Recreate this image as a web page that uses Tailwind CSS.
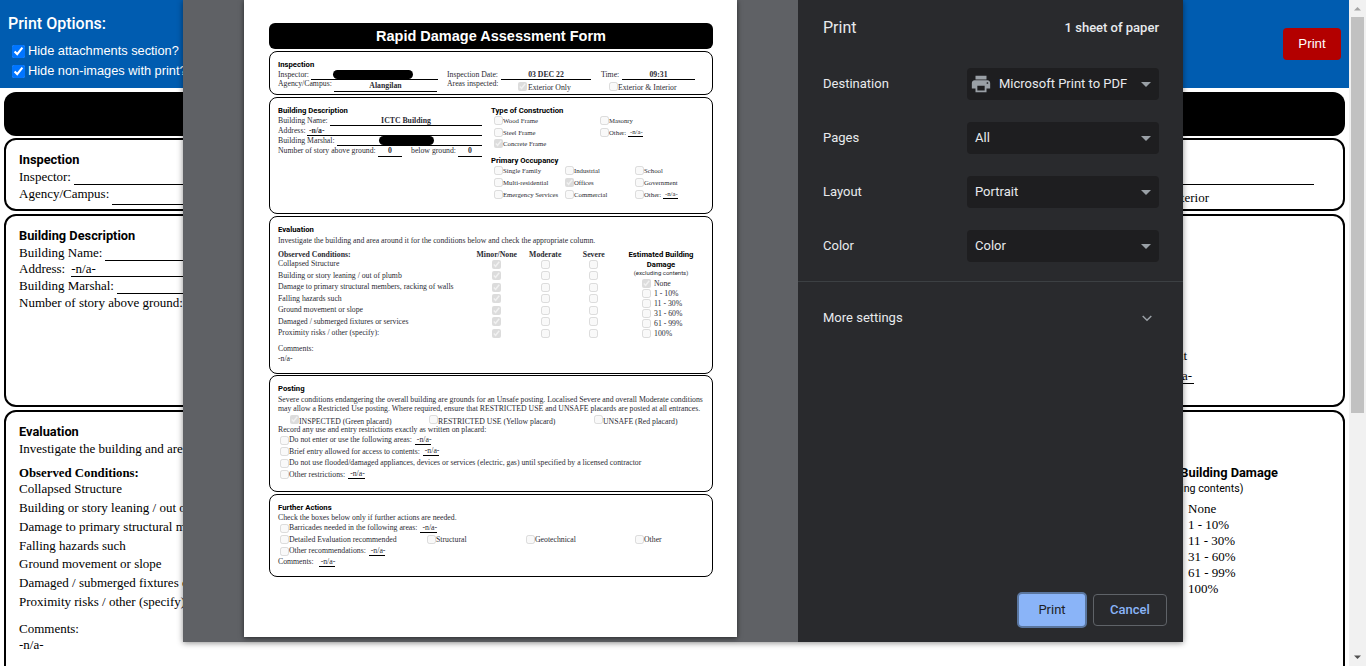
<!DOCTYPE html>
<html lang="en">
<head>
  <meta charset="UTF-8">
  <title>Rapid Damage Assessment Form</title>
  <script src="https://cdn.jsdelivr.net/npm/@tailwindcss/browser@4"></script>
</head>
<body class="overflow-hidden bg-white">
<div class="relative flex h-[666px] w-[1366px] overflow-hidden font-['Liberation_Serif',serif] text-black">

  <!-- page behind the print dialog -->
  <main class="w-[1349px] shrink-0">
    <header class="flex h-[88px] justify-between bg-[#005cb0] pl-2 pr-2 text-white font-['Roboto',sans-serif]">
      <div>
        <h2 class="mt-[14px] text-[16px] leading-[20px] font-medium">Print Options:</h2>
        <label class="mt-[7px] flex h-5 items-center gap-[3px] pl-1 text-[12.8px] font-['Liberation_Sans',sans-serif]"><input type="checkbox" checked class="m-0 h-[13px] w-[13px]">Hide attachments section?</label>
        <label class="flex h-5 items-center gap-[3px] pl-1 text-[12.8px] font-['Liberation_Sans',sans-serif]"><input type="checkbox" checked class="m-0 h-[13px] w-[13px]">Hide non-images with print?</label>
      </div>
      <button class="mt-7 h-8 w-[58px] rounded bg-[#b30000] text-[13.33px] font-['Liberation_Sans',sans-serif] text-white">Print</button>
    </header>

    <div class="px-1 pt-1 text-[13px]">
      <div class="h-[44px] rounded-[12px] bg-black"></div>

      <section class="mt-[2px] h-[73px] rounded-[12px] border-2 border-black pl-[13px] pt-3">
        <h3 class="h-4 text-[12.8px] leading-4 font-bold font-['Roboto',sans-serif]">Inspection</h3>
        <div class="flex h-[17px] pr-[29px] leading-[17px]"><span>Inspector:</span><span class="ml-[3px] flex-1 border-b border-black"></span></div>
        <div class="flex h-5 leading-[17px]"><span>Agency/Campus:</span><span class="ml-[3px] w-[400px] border-b border-black"></span><span class="ml-auto mr-[134px] pt-1">Exterior &amp; Interior</span></div>
      </section>

      <section class="mt-[3px] flex h-[193px] justify-between rounded-[12px] border-2 border-black pl-[13px] pt-3">
        <div class="w-[500px]">
          <h3 class="h-4 text-[12.8px] leading-4 font-bold font-['Roboto',sans-serif]">Building Description</h3>
          <div class="flex h-[17px] leading-[17px]"><span>Building Name:</span><span class="ml-[3px] flex-1 border-b border-black"></span></div>
          <div class="flex h-[16px] leading-[16px]"><span>Address:</span><span class="ml-[6px] flex-1 border-b border-black">-n/a-</span></div>
          <div class="flex h-[17px] leading-[17px]"><span>Building Marshal:</span><span class="ml-[3px] flex-1 border-b border-black"></span></div>
          <div class="h-[17px] leading-[17px]">Number of story above ground:</div>
        </div>
        <div class="mr-[149px] flex flex-col items-end pt-[120px]">
          <span class="mr-[7px] h-5 leading-4">Government</span>
          <span class="leading-[15px]">Other: <span class="border-b border-black px-[2px]">-n/a-</span></span>
        </div>
      </section>

      <section class="mt-[3px] flex h-[270px] justify-between rounded-[12px] border-2 border-black pl-[13px] pt-3">
        <div class="w-[200px] whitespace-nowrap">
          <h3 class="h-4 text-[12.8px] leading-4 font-bold font-['Roboto',sans-serif]">Evaluation</h3>
          <p class="h-[17px] leading-[17px]">Investigate the building and area</p>
          <p class="mt-2 h-4 text-[12.8px] leading-4 font-bold">Observed Conditions:</p>
          <p class="h-4 leading-4">Collapsed Structure</p>
          <p class="mt-[3px] h-4 leading-4">Building or story leaning / out of</p>
          <p class="mt-[3px] h-4 leading-4">Damage to primary structural me</p>
          <p class="mt-[3px] h-4 leading-4">Falling hazards such</p>
          <p class="mt-[2px] h-4 leading-4">Ground movement or slope</p>
          <p class="mt-[3px] h-4 leading-4">Damaged / submerged fixtures or</p>
          <p class="mt-[3px] h-4 leading-4">Proximity risks / other (specify):</p>
          <p class="mt-[11px] h-4 leading-4">Comments:</p>
          <p class="h-4 leading-4">-n/a-</p>
        </div>
        <div class="mr-[65px] w-[164px] pt-[41px]">
          <h4 class="whitespace-nowrap text-right text-[12.8px] leading-4 font-bold font-['Roboto',sans-serif]">Estimated Building Damage</h4>
          <p class="pr-[2px] text-center text-[10.67px] leading-4 font-['Roboto',sans-serif]">(excluding contents)</p>
          <ul class="mt-1 pl-[74px] leading-4">
            <li>None</li><li>1 - 10%</li><li>11 - 30%</li><li>31 - 60%</li><li>61 - 99%</li><li>100%</li>
          </ul>
        </div>
      </section>
    </div>
  </main>

  <!-- scrollbar -->
  <div class="flex w-[17px] shrink-0 flex-col items-center bg-[#f1f1f1]">
    <svg class="h-[17px] w-[17px]" viewBox="0 0 17 17"><path d="M5 10.5 8.5 7l3.500 3.500z" fill="#a3a3a3"/></svg>
    <div class="h-[396px] w-[13px] bg-[#c1c1c1]"></div>
    <svg class="mt-auto h-[17px] w-[17px]" viewBox="0 0 17 17"><path d="M5 6.500 8.500 10l3.500-3.500z" fill="#505050"/></svg>
  </div>

  <!-- print dialog -->
  <div class="absolute left-[183px] top-0 flex h-[642px] w-[1000px] shadow-[0_1px_6px_rgba(0,0,0,0.45)]">
    <div class="w-[615px] bg-[#5f6165] pl-[61px]">
      <div class="h-[637px] w-[493px] bg-white pl-[25px] pt-[23px] text-[7.75px] leading-[10px] text-[#2b2b33] shadow-[0_1px_5px_rgba(0,0,0,0.6)] [&_input]:opacity-75">
        <div class="w-[444px]">
          <h1 class="flex h-[26px] items-center justify-center rounded-[6px] bg-black text-[14.5px] font-bold text-white font-['Liberation_Sans',sans-serif]">Rapid Damage Assessment Form</h1>

          <section class="mt-[2px] h-[44px] rounded-[8px] border-[1.5px] border-black pl-2 pt-2">
            <h3 class="h-[9px] text-[7.7px] leading-[9px] font-bold text-black font-['Roboto',sans-serif]">Inspection</h3>
            <div class="mt-[1px] flex h-[10px] leading-[10px]">
              <span class="w-[33px]">Inspector:</span>
              <span class="flex w-[127px] items-center border-b border-black pl-[22px]"><span class="h-[9px] w-[80px] rounded-full bg-black"></span></span>
              <span class="ml-[9px] w-[54px]">Inspection Date:</span>
              <span class="w-[90px] border-b border-black text-center font-bold">03 DEC 22</span>
              <span class="ml-[10px] w-[21px]">Time:</span>
              <span class="w-[73px] border-b border-black text-center font-bold">09:31</span>
            </div>
            <div class="flex h-[12px] leading-[10px]">
              <span class="-mt-[1px] w-[56px]">Agency/Campus:</span>
              <span class="w-[103px] border-b border-black pt-[1px] text-center font-bold">Alangilan</span>
              <span class="-mt-[1px] ml-[10px] w-[71px]">Areas inspected:</span>
              <input type="checkbox" disabled checked class="m-0 mt-[2px] h-[9px] w-[9px]">
              <span class="ml-[1px] w-[81px] pt-[3px]">Exterior Only</span>
              <input type="checkbox" disabled class="m-0 mt-[2px] h-[9px] w-[9px]">
              <span class="pt-[3px]">Exterior &amp; Interior</span>
            </div>
          </section>

          <section class="mt-[2px] flex h-[117px] rounded-[8px] border-[1.5px] border-black pl-2 pt-2">
            <div class="w-[204px]">
              <h3 class="h-[9px] text-[7.7px] leading-[9px] font-bold text-black font-['Roboto',sans-serif]">Building Description</h3>
              <div class="mt-[1px] flex h-[10px] leading-[10px]"><span class="w-[52px]">Building Name:</span><span class="flex-1 border-b border-black text-center font-bold">ICTC Building</span></div>
              <div class="flex h-[10px] leading-[10px]"><span class="w-[29px]">Address:</span><span class="flex-1 border-b border-black pl-[2px] font-bold">-n/a-</span></div>
              <div class="flex h-[10px] leading-[10px]"><span class="w-[59px]">Building Marshal:</span><span class="flex flex-1 items-center border-b border-black pl-[42px]"><span class="h-[9px] w-[55px] rounded-full bg-black"></span></span></div>
              <div class="flex h-[11px] whitespace-nowrap leading-[10px]"><span class="w-[100px]">Number of story above ground:</span><span class="w-[24px] border-b border-black text-center font-bold">0</span><span class="ml-[9px] w-[47px]">below ground:</span><span class="w-[24px] border-b border-black text-center font-bold">0</span></div>
            </div>
            <div class="ml-[9px] text-[6.75px]">
              <h3 class="h-[9px] text-[7.7px] leading-[9px] font-bold text-black font-['Roboto',sans-serif]">Type of Construction</h3>
              <div class="grid grid-cols-[106px_100px] pl-[3px] leading-[11.5px]">
                <label class="flex h-[11.5px] items-center"><input type="checkbox" disabled class="m-0 h-[9px] w-[9px]">Wood Frame</label>
                <label class="flex h-[11.5px] items-center"><input type="checkbox" disabled class="m-0 h-[9px] w-[9px]">Masonry</label>
                <label class="flex h-[11.5px] items-center"><input type="checkbox" disabled class="m-0 h-[9px] w-[9px]">Steel Frame</label>
                <label class="flex h-[11.5px] items-center"><input type="checkbox" disabled class="m-0 h-[9px] w-[9px]">Other: <span class="ml-[2px] border-b border-black leading-[8px]">&nbsp;-n/a-</span></label>
                <label class="flex h-[11.5px] items-center"><input type="checkbox" disabled checked class="m-0 h-[9px] w-[9px]">Concrete Frame</label>
              </div>
              <h3 class="mt-[6px] h-[9px] text-[7.7px] leading-[9px] font-bold text-black font-['Roboto',sans-serif]">Primary Occupancy</h3>
              <div class="grid w-[212px] grid-cols-[71px_70px_71px] pl-[3px]">
                <label class="flex h-3 items-center"><input type="checkbox" disabled class="m-0 h-[9px] w-[9px]">Single Family</label>
                <label class="flex h-3 items-center"><input type="checkbox" disabled class="m-0 h-[9px] w-[9px]">Industrial</label>
                <label class="flex h-3 items-center"><input type="checkbox" disabled class="m-0 h-[9px] w-[9px]">School</label>
                <label class="flex h-3 items-center"><input type="checkbox" disabled class="m-0 h-[9px] w-[9px]">Multi-residential</label>
                <label class="flex h-3 items-center"><input type="checkbox" disabled checked class="m-0 h-[9px] w-[9px]">Offices</label>
                <label class="flex h-3 items-center"><input type="checkbox" disabled class="m-0 h-[9px] w-[9px]">Government</label>
                <label class="flex h-3 items-center whitespace-nowrap"><input type="checkbox" disabled class="m-0 h-[9px] w-[9px]">Emergency Services</label>
                <label class="flex h-3 items-center"><input type="checkbox" disabled class="m-0 h-[9px] w-[9px]">Commercial</label>
                <label class="flex h-3 items-center"><input type="checkbox" disabled class="m-0 h-[9px] w-[9px]">Other: <span class="ml-[2px] border-b border-black leading-[8px]">&nbsp;-n/a-</span></label>
              </div>
            </div>
          </section>

          <section class="mt-[2px] h-[158px] rounded-[8px] border-[1.5px] border-black pl-2 pt-2">
            <h3 class="h-[9px] text-[7.7px] leading-[9px] font-bold text-black font-['Roboto',sans-serif]">Evaluation</h3>
            <p class="mt-[1.5px] h-[10px] leading-[10px]">Investigate the building and area around it for the conditions below and check the appropriate column.</p>
            <div class="mt-[5px] flex">
              <div class="w-[340px]">
                <div class="grid h-2 grid-cols-[194.5px_48.5px_48.5px_48.5px] text-center font-bold leading-2">
                  <span class="text-left">Observed Conditions:</span><span>Minor/None</span><span>Moderate</span><span>Severe</span>
                </div>
                <div class="grid grid-cols-[194.5px_48.5px_48.5px_48.5px] items-center justify-items-center [&>*:nth-child(4n+1)]:justify-self-start auto-rows-[11.5px]">
                  <span>Collapsed Structure</span><input type="checkbox" disabled checked class="m-0 h-[9px] w-[9px]"><input type="checkbox" disabled class="m-0 h-[9px] w-[9px]"><input type="checkbox" disabled class="m-0 h-[9px] w-[9px]">
                  <span>Building or story leaning / out of plumb</span><input type="checkbox" disabled checked class="m-0 h-[9px] w-[9px]"><input type="checkbox" disabled class="m-0 h-[9px] w-[9px]"><input type="checkbox" disabled class="m-0 h-[9px] w-[9px]">
                  <span>Damage to primary structural members, racking of walls</span><input type="checkbox" disabled checked class="m-0 h-[9px] w-[9px]"><input type="checkbox" disabled class="m-0 h-[9px] w-[9px]"><input type="checkbox" disabled class="m-0 h-[9px] w-[9px]">
                  <span>Falling hazards such</span><input type="checkbox" disabled checked class="m-0 h-[9px] w-[9px]"><input type="checkbox" disabled class="m-0 h-[9px] w-[9px]"><input type="checkbox" disabled class="m-0 h-[9px] w-[9px]">
                  <span>Ground movement or slope</span><input type="checkbox" disabled checked class="m-0 h-[9px] w-[9px]"><input type="checkbox" disabled class="m-0 h-[9px] w-[9px]"><input type="checkbox" disabled class="m-0 h-[9px] w-[9px]">
                  <span>Damaged / submerged fixtures or services</span><input type="checkbox" disabled checked class="m-0 h-[9px] w-[9px]"><input type="checkbox" disabled class="m-0 h-[9px] w-[9px]"><input type="checkbox" disabled class="m-0 h-[9px] w-[9px]">
                  <span>Proximity risks / other (specify):</span><input type="checkbox" disabled checked class="m-0 h-[9px] w-[9px]"><input type="checkbox" disabled class="m-0 h-[9px] w-[9px]"><input type="checkbox" disabled class="m-0 h-[9px] w-[9px]">
                </div>
                <p class="mt-[4.5px] h-[10px] leading-[10px]">Comments:</p>
                <p class="h-[10px] leading-[10px]">-n/a-</p>
              </div>
              <div class="-mt-[1px] w-[86px]">
                <h4 class="text-center text-[7.7px] leading-[10px] font-bold text-black font-['Roboto',sans-serif]">Estimated Building Damage</h4>
                <p class="-mt-[1px] h-2 text-center text-[6px] leading-2 font-['Roboto',sans-serif]">(excluding contents)</p>
                <div class="mt-[2px] pl-6">
                  <label class="flex h-[10px] items-center gap-[3px]"><input type="checkbox" disabled checked class="m-0 h-[9px] w-[9px]">None</label>
                  <label class="flex h-[10px] items-center gap-[3px]"><input type="checkbox" disabled class="m-0 h-[9px] w-[9px]">1 - 10%</label>
                  <label class="flex h-[10px] items-center gap-[3px]"><input type="checkbox" disabled class="m-0 h-[9px] w-[9px]">11 - 30%</label>
                  <label class="flex h-[10px] items-center gap-[3px]"><input type="checkbox" disabled class="m-0 h-[9px] w-[9px]">31 - 60%</label>
                  <label class="flex h-[10px] items-center gap-[3px]"><input type="checkbox" disabled class="m-0 h-[9px] w-[9px]">61 - 99%</label>
                  <label class="flex h-[10px] items-center gap-[3px]"><input type="checkbox" disabled class="m-0 h-[9px] w-[9px]">100%</label>
                </div>
              </div>
            </div>
          </section>

          <section class="mt-[1px] h-[117px] rounded-[8px] border-[1.5px] border-black pl-2 pt-2">
            <h3 class="h-[9px] text-[7.7px] leading-[9px] font-bold text-black font-['Roboto',sans-serif]">Posting</h3>
            <p class="mt-[2px] whitespace-nowrap leading-[9px]">Severe conditions endangering the overall building are grounds for an Unsafe posting. Localised Severe and overall Moderate conditions<br>may allow a Restricted Use posting. Where required, ensure that RESTRICTED USE and UNSAFE placards are posted at all entrances.</p>
            <div class="mt-[2.5px] flex h-[9.5px] pl-3 leading-[9.5px]">
              <label class="flex w-[139px]"><input type="checkbox" disabled checked class="m-0 -mt-[1px] h-[9px] w-[9px]"><span class="pt-[1px]">INSPECTED (Green placard)</span></label>
              <label class="flex w-[165px]"><input type="checkbox" disabled class="m-0 -mt-[1px] h-[9px] w-[9px]"><span class="pt-[1px]">RESTRICTED USE (Yellow placard)</span></label>
              <label class="flex"><input type="checkbox" disabled class="m-0 -mt-[1px] h-[9px] w-[9px]"><span class="pt-[1px]">UNSAFE (Red placard)</span></label>
            </div>
            <p class="h-[9.5px] leading-[9.5px]">Record any use and entry restrictions exactly as written on placard:</p>
            <label class="flex h-[11.5px] items-center pl-[2px]"><input type="checkbox" disabled class="m-0 h-[9px] w-[9px]">Do not enter or use the following areas:<span class="ml-[3px] border-b border-black leading-[8px]">&nbsp;-n/a-</span></label>
            <label class="flex h-[11.5px] items-center pl-[2px]"><input type="checkbox" disabled class="m-0 h-[9px] w-[9px]">Brief entry allowed for access to contents:<span class="ml-[3px] border-b border-black leading-[8px]">&nbsp;-n/a-</span></label>
            <label class="flex h-[11.5px] items-center pl-[2px]"><input type="checkbox" disabled class="m-0 h-[9px] w-[9px]">Do not use flooded/damaged appliances, devices or services (electric, gas) until specified by a licensed contractor</label>
            <label class="flex h-[11.5px] items-center pl-[2px]"><input type="checkbox" disabled class="m-0 h-[9px] w-[9px]">Other restrictions:<span class="ml-[3px] border-b border-black leading-[8px]">&nbsp;-n/a-</span></label>
          </section>

          <section class="mt-[2px] h-[83px] rounded-[8px] border-[1.5px] border-black pl-2 pt-2">
            <h3 class="h-[9px] text-[7.7px] leading-[9px] font-bold text-black font-['Roboto',sans-serif]">Further Actions</h3>
            <p class="mt-[0.5px] h-[10px] leading-[10px]">Check the boxes below only if further actions are needed.</p>
            <label class="flex h-[11.5px] items-center pl-[2px]"><input type="checkbox" disabled class="m-0 h-[9px] w-[9px]">Barricades needed in the following areas:<span class="ml-[3px] border-b border-black leading-[8px]">&nbsp;-n/a-</span></label>
            <div class="flex h-[11.5px] items-center pl-[2px]">
              <label class="flex w-[147px] items-center"><input type="checkbox" disabled class="m-0 h-[9px] w-[9px]">Detailed Evaluation recommended</label>
              <label class="flex w-[99px] items-center"><input type="checkbox" disabled class="m-0 h-[9px] w-[9px]">Structural</label>
              <label class="flex w-[109px] items-center"><input type="checkbox" disabled class="m-0 h-[9px] w-[9px]">Geotechnical</label>
              <label class="flex items-center"><input type="checkbox" disabled class="m-0 h-[9px] w-[9px]">Other</label>
            </div>
            <label class="flex h-[11.5px] items-center pl-[2px]"><input type="checkbox" disabled class="m-0 h-[9px] w-[9px]">Other recommendations:<span class="ml-[3px] border-b border-black leading-[8px]">&nbsp;-n/a-</span></label>
            <p class="h-[10px] leading-[10px]">Comments: <span class="ml-[3px] border-b border-black">&nbsp;-n/a-</span></p>
          </section>
        </div>
      </div>
    </div>

    <!-- print settings -->
    <aside class="flex w-[385px] flex-col bg-[#292a2d] text-[13px] text-[#e8eaed] font-['Roboto',sans-serif]">
      <div class="flex h-[56px] items-center justify-between pl-[25px] pr-6">
        <h2 class="text-[16px]">Print</h2>
        <span class="font-medium">1 sheet of paper</span>
      </div>
      <div class="mt-3 flex flex-col gap-[22px] pl-[25px] pr-6">
        <div class="flex h-8 items-center justify-between">
          <span>Destination</span>
          <div class="flex h-8 w-[192px] items-center rounded bg-[#1e1e20] pl-[3px] pr-[8px]">
            <svg class="h-[22px] w-[22px]" viewBox="0 0 24 24" fill="#9aa0a6"><path d="M19 8H5c-1.660 0-3 1.340-3 3v6h4v4h12v-4h4v-6c0-1.660-1.340-3-3-3zm-3 11H8v-5h8v5zm3-7c-.55 0-1-.45-1-1s.45-1 1-1 1 .45 1 1-.45 1-1 1zm-1-9H6v4h12V3z"/></svg>
            <span class="ml-[7px]">Microsoft Print to PDF</span>
            <svg class="ml-auto h-[5px] w-[10px]" viewBox="0 0 10 5" fill="#9aa0a6"><path d="M0 0h10L5 5z"/></svg>
          </div>
        </div>
        <div class="flex h-8 items-center justify-between">
          <span>Pages</span>
          <div class="flex h-8 w-[192px] items-center justify-between rounded bg-[#1e1e20] pl-2 pr-[8px]">
            <span>All</span>
            <svg class="h-[5px] w-[10px]" viewBox="0 0 10 5" fill="#9aa0a6"><path d="M0 0h10L5 5z"/></svg>
          </div>
        </div>
        <div class="flex h-8 items-center justify-between">
          <span>Layout</span>
          <div class="flex h-8 w-[192px] items-center justify-between rounded bg-[#1e1e20] pl-2 pr-[8px]">
            <span>Portrait</span>
            <svg class="h-[5px] w-[10px]" viewBox="0 0 10 5" fill="#9aa0a6"><path d="M0 0h10L5 5z"/></svg>
          </div>
        </div>
        <div class="flex h-8 items-center justify-between">
          <span>Color</span>
          <div class="flex h-8 w-[192px] items-center justify-between rounded bg-[#1e1e20] pl-2 pr-[8px]">
            <span>Color</span>
            <svg class="h-[5px] w-[10px]" viewBox="0 0 10 5" fill="#9aa0a6"><path d="M0 0h10L5 5z"/></svg>
          </div>
        </div>
      </div>
      <div class="mt-[19px] flex h-[73px] items-center justify-between border-t border-[#3c4043] pl-[25px] pr-[31px]">
        <span>More settings</span>
        <svg class="h-[7px] w-[10px]" viewBox="0 0 10 7" fill="none" stroke="#9aa0a6" stroke-width="1.500"><path d="M.7 1 5 5.300 9.300 1"/></svg>
      </div>
      <div class="mt-auto mb-[14px] flex items-center justify-end gap-[6px] pr-4">
        <button class="h-9 w-[70px] rounded-[5px] border-2 border-[#5a769f] bg-[#8ab4f8] text-[#202124]">Print</button>
        <button class="h-8 w-[74px] rounded border border-[#5f6368] font-medium text-[#8ab4f8]">Cancel</button>
      </div>
    </aside>
  </div>
</div>
</body>
</html>
